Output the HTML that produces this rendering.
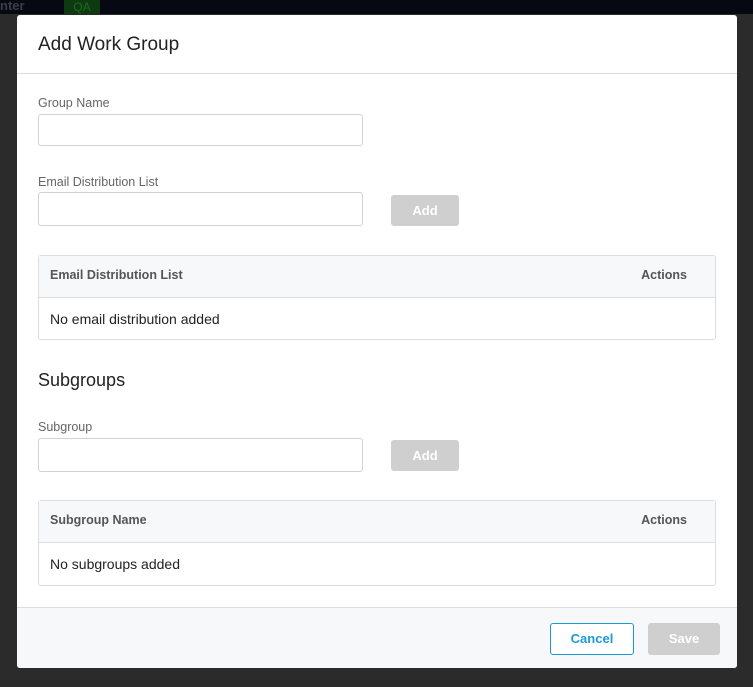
<!DOCTYPE html>
<html><head><style>
*{box-sizing:border-box;margin:0;padding:0}
body{width:753px;height:687px;background:#2b2b2b;font-family:"Liberation Sans",sans-serif;position:relative;overflow:hidden}
.top{position:absolute;left:0;top:0;width:753px;height:14px;background:#070912}
.top span{position:absolute;top:-2px;color:#3b3f48;font-weight:bold;font-size:13px}
.qa{position:absolute;left:64px;top:0;width:36px;height:14px;background:#0e3a12;color:#1d6a23;font-size:12px;text-align:center}
.modal{position:absolute;left:17px;top:15px;width:720px;height:653px;background:#fff;border-radius:3px;overflow:hidden}
.hd{height:59px;border-bottom:1px solid #dcdde0;padding:19px 21px;font-size:19px;color:#222}
.lbl{position:absolute;left:21px;font-size:12.5px;color:#666}
.inp{position:absolute;left:21px;width:325px;height:32px;border:1px solid #cfd2d6;border-radius:3px}
.btn{position:absolute;left:374px;width:68px;height:31px;background:#cfcfd0;border-radius:3px;color:#fff;font-weight:bold;font-size:13px;text-align:center;line-height:31px}
.tbl{position:absolute;left:21px;width:678px;height:85px;border:1px solid #dcdde0;border-radius:3px}
.th{height:42px;background:#f7f8fa;border-bottom:1px solid #dcdde0;font-size:12.5px;font-weight:bold;color:#555;padding:0 11px;line-height:38px;position:relative}
.th b{position:absolute;right:28px}
.td{padding:0 11px;line-height:42px;font-size:14px;color:#222}
.h2{position:absolute;left:21px;top:355px;font-size:18px;color:#222}
.ft{position:absolute;left:0;top:592px;width:720px;height:61px;background:#f7f8fa;border-top:1px solid #dcdde0}
</style></head><body>
<div class="top"><span style="left:0">nter</span><div class="qa">QA</div></div>
<div class="modal">
<div class="hd">Add Work Group</div>
<div class="lbl" style="top:81px">Group Name</div>
<div class="inp" style="top:99px"></div>
<div class="lbl" style="top:160px">Email Distribution List</div>
<div class="inp" style="top:177px;height:34px"></div>
<div class="btn" style="top:180px">Add</div>
<div class="tbl" style="top:240px"><div class="th">Email Distribution List<b>Actions</b></div><div class="td">No email distribution added</div></div>
<div class="h2">Subgroups</div>
<div class="lbl" style="top:405px">Subgroup</div>
<div class="inp" style="top:423px;height:34px"></div>
<div class="btn" style="top:425px">Add</div>
<div class="tbl" style="top:485px;height:86px"><div class="th">Subgroup Name<b>Actions</b></div><div class="td">No subgroups added</div></div>
<div class="ft">
<div style="position:absolute;left:533px;top:15px;width:84px;height:32px;border:1px solid #1a9ad6;border-radius:3px;color:#1a9ad6;font-weight:bold;font-size:13px;text-align:center;line-height:30px;background:#fff">Cancel</div>
<div style="position:absolute;left:631px;top:15px;width:72px;height:32px;background:#cfcfd0;border-radius:3px;color:#fff;font-weight:bold;font-size:13px;text-align:center;line-height:32px">Save</div>
</div>
</div>
</body></html>
